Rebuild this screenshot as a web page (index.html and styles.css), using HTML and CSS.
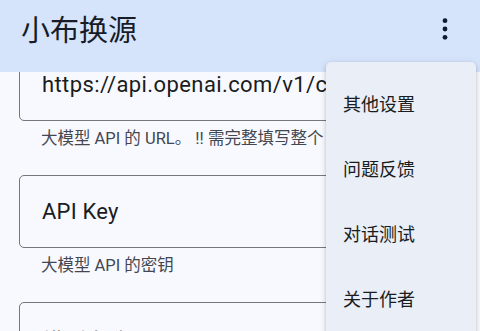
FILE: index.html
```html
<!DOCTYPE html>
<html lang="zh">
<head>
<meta charset="utf-8">
<title>小布换源</title>
<link rel="stylesheet" href="styles.css">
</head>
<body>
<div class="screen">
  <header class="appbar">
    <h1 class="title">小布换源</h1>
    <button class="more" aria-label="更多">
      <svg width="24" height="24" viewBox="0 0 24 24"><circle cx="12" cy="3.7" r="2.4"/><circle cx="12" cy="12" r="2.4"/><circle cx="12" cy="20.3" r="2.4"/></svg>
    </button>
  </header>
  <main class="scroller">
    <div class="content">
      <section class="group">
        <div class="field"><span class="value url">https://api.openai.com/v1/chat/completions</span></div>
        <p class="helper">大模型 API 的 URL。 !! 需完整填写整个 URL</p>
      </section>
      <section class="group">
        <div class="field"><span class="value">API Key</span></div>
        <p class="helper">大模型 API 的密钥</p>
      </section>
      <section class="group">
        <div class="field"><span class="value">模型名称</span></div>
        <p class="helper">大模型的名称</p>
      </section>
    </div>
  </main>
  <ul class="menu">
    <li class="menu-item">其他设置</li>
    <li class="menu-item">问题反馈</li>
    <li class="menu-item">对话测试</li>
    <li class="menu-item">关于作者</li>
  </ul>
</div>
</body>
</html>
```
FILE: styles.css
```css
* { box-sizing: border-box; }
html, body { margin: 0; padding: 0; }
body {
  background: #f8f9ff;
  font-family: Roboto, "Noto Sans CJK SC", sans-serif;
  color: #1a1c20;
  overflow: hidden;
}
.screen {
  position: relative;
  width: 480px;
  height: 331px;
  display: flex;
  flex-direction: column;
  overflow: hidden;
}
.appbar {
  flex: 0 0 72px;
  background: #d5e3fb;
  display: flex;
  align-items: center;
  justify-content: space-between;
  padding: 0 23px 15px 21px;
}
.title {
  margin: 0;
  font-family: "Noto Sans CJK SC", sans-serif;
  font-weight: 400;
  font-size: 29px;
  line-height: 1;
  color: #171c26;
}
.more {
  border: 0;
  background: none;
  padding: 0;
  width: 24px;
  height: 24px;
  display: flex;
}
.more svg { fill: #0f1a33; }
.scroller {
  flex: 1;
  overflow: hidden;
}
.content {
  margin-top: -24px;
  padding: 0 20px 0 19px;
}
.group {
  margin-bottom: 25px;
}
.field {
  height: 73px;
  border: 1.4px solid #747780;
  border-radius: 5px;
  display: flex;
  align-items: center;
  padding: 0 22px;
  overflow: hidden;
}
.value {
  font-size: 22px;
  letter-spacing: 0.2px;
  white-space: nowrap;
  color: #1a1c20;
}
.url {
  letter-spacing: 0.4px;
}
.helper {
  margin: 0;
  padding: 7px 0 0 22px;
  font-size: 16.5px;
  line-height: 22px;
  color: #44474f;
  white-space: nowrap;
  overflow: hidden;
}
.menu {
  position: absolute;
  top: 62px;
  left: 326px;
  width: 150px;
  height: 300px;
  margin: 0;
  padding: 9px 0 0;
  list-style: none;
  background: #e9eef7;
  border-radius: 5px;
  box-shadow: 0 2px 4px rgba(0,0,0,0.18), 0 1px 8px rgba(0,0,0,0.08);
}
.menu-item {
  height: 64.8px;
  display: flex;
  align-items: center;
  padding: 0 17px;
  font-family: "Noto Sans CJK SC", sans-serif;
  font-size: 18px;
  color: #1a1c20;
}
```
